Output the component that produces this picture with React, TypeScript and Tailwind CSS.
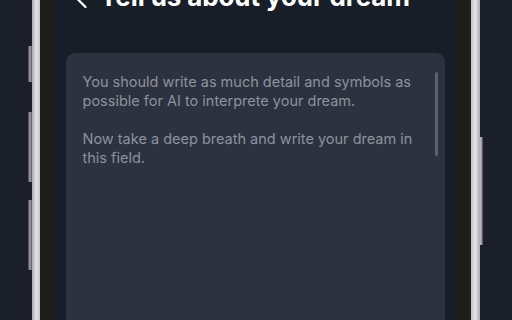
import React from "react";

export default function App() {
  return (
    <div className="w-[512px] h-[320px] overflow-hidden bg-[#1a1f29] flex justify-center" style={{ fontFamily: "Inter, 'Noto Sans', sans-serif" }}>
      <div className="relative ml-[-1px] mt-[-40px] h-[400px] w-[448px] flex">
        {/* left buttons */}
        <div className="absolute left-[-4px] top-[86px] h-[36px] w-[4px] rounded-l-[1px] bg-gradient-to-r from-[#4a4650] via-[#a8a4ac] to-[#5a5660]" />
        <div className="absolute left-[-4px] top-[152px] h-[70px] w-[4px] rounded-l-[1px] bg-gradient-to-r from-[#4a4650] via-[#a8a4ac] to-[#5a5660]" />
        <div className="absolute left-[-4px] top-[240px] h-[70px] w-[4px] rounded-l-[1px] bg-gradient-to-r from-[#4a4650] via-[#a8a4ac] to-[#5a5660]" />
        {/* right button */}
        <div className="absolute right-[-3px] top-[177px] h-[108px] w-[3px] bg-gradient-to-r from-[#c8c8cc] via-[#9a969e] to-[#4a4650]" />
        {/* left silver */}
        <div className="w-[8px] h-full bg-gradient-to-r from-[#a9a9ab] via-[#e4e4e6] to-[#c4c4c6]" />
        {/* bezel + screen */}
        <div className="flex-1 flex bg-[#1e1d1a] px-[14px]">
          <div className="flex-1 bg-[#181e28] flex flex-col pt-[21px] px-[12px]">
            <div className="grid grid-cols-[42px_1fr_42px] items-center h-[31px] -mx-[12px]">
              <div className="pl-[20px] flex items-center">
                <svg width="13" height="22" viewBox="0 0 13 22" fill="none">
                  <polyline points="11.5,1 1.5,11 11.5,21" stroke="#ffffff" strokeWidth="2.2" strokeLinecap="round" strokeLinejoin="round" />
                </svg>
              </div>
              <div className="text-center text-white font-bold text-[26px] leading-[31px] tracking-[-0.1px] whitespace-nowrap">Tell us about your dream</div>
              <div />
            </div>
            <div className="mt-[41px] flex-1 rounded-[9px] bg-[#2c3240] flex pl-[17px] pr-[7px] pt-[19px]">
              <div className="w-[345px] text-[14.5px] leading-[19px] text-[#8d929c]">
                <p>You should write as much detail and symbols as possible for AI to interprete your dream.</p>
                <p className="mt-[19px]">Now take a deep breath and write your dream in this field.</p>
              </div>
              <div className="ml-auto w-[3px] h-[84px] rounded-full bg-[#5b606a]" />
            </div>
          </div>
        </div>
        {/* right silver */}
        <div className="w-[9px] h-full bg-gradient-to-r from-[#c4c4c6] via-[#e4e4e6] to-[#a9a9ab]" />
      </div>
    </div>
  );
}
